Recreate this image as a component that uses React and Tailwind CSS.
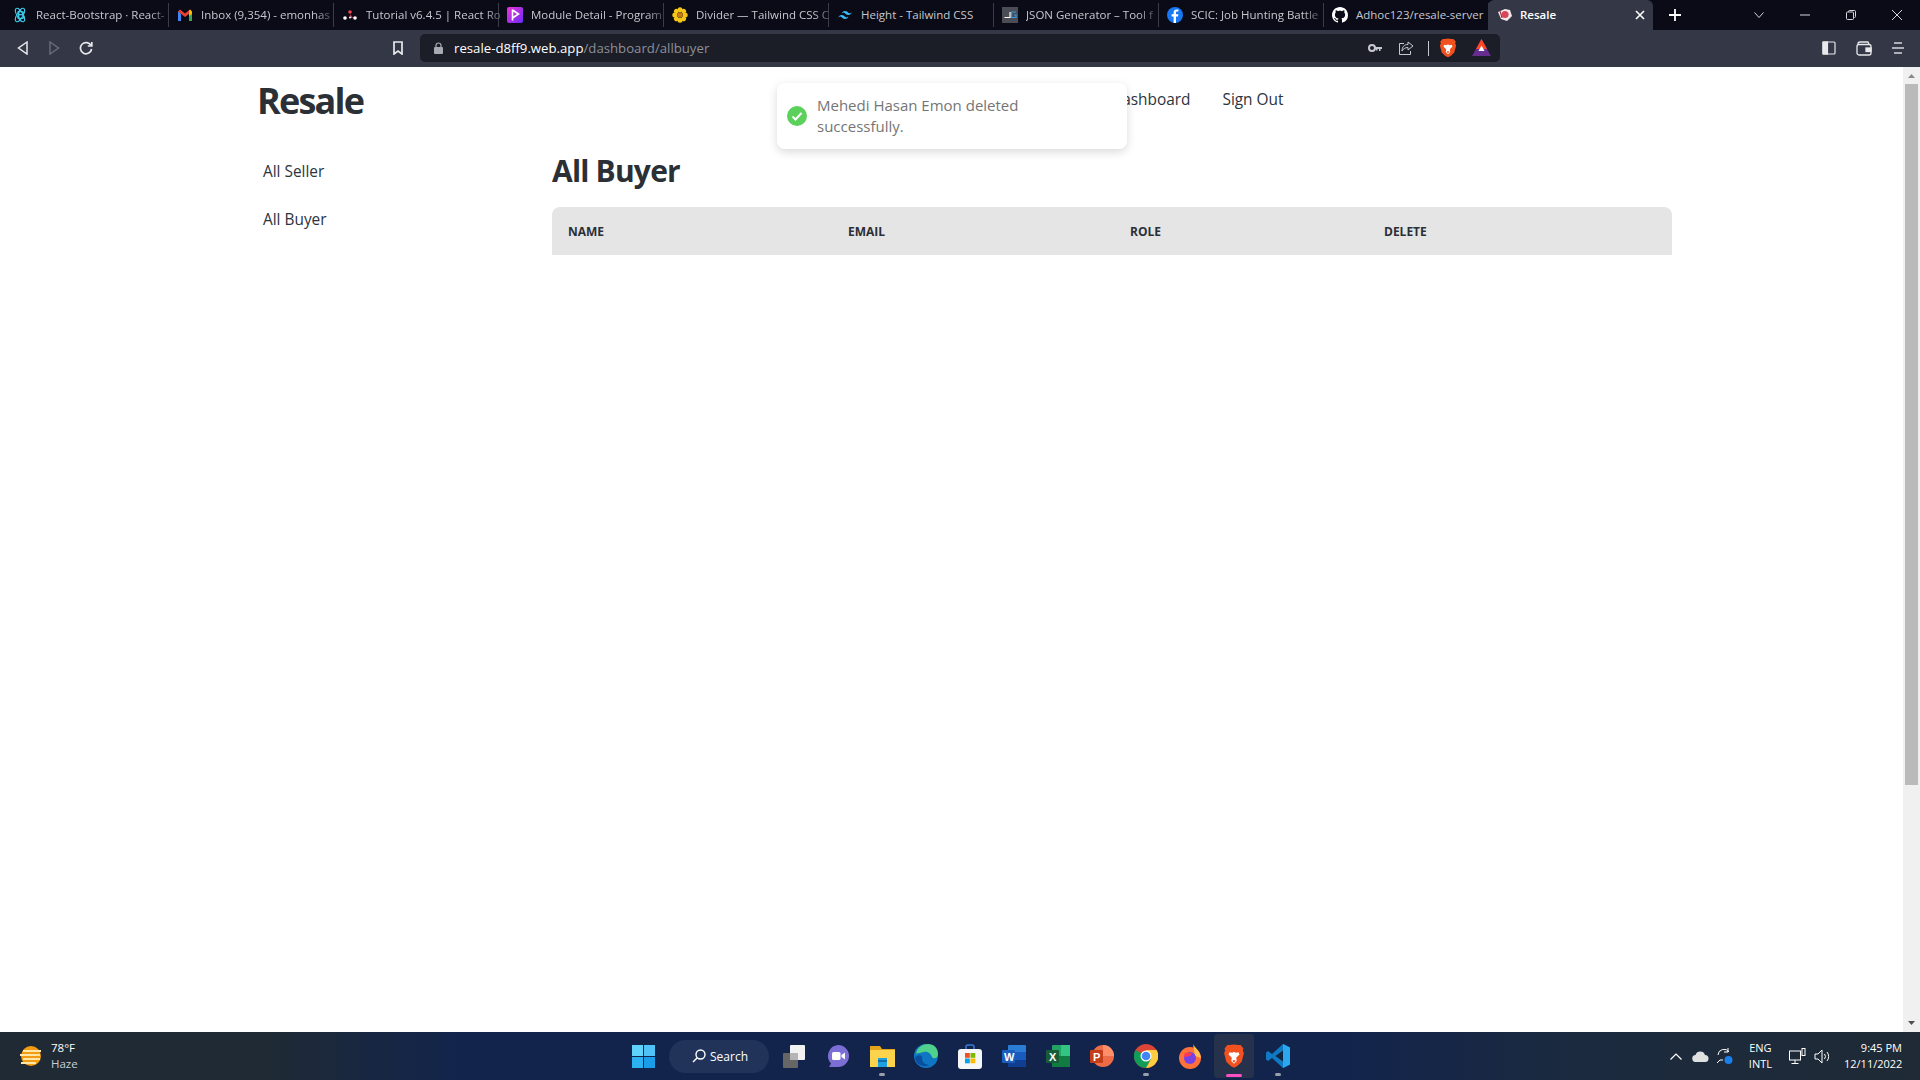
import React from "react";

const Bootstrap = () => (
  <svg width="16" height="16" viewBox="0 0 16 16" fill="none" stroke="#41c7e8" strokeWidth="1">
    <ellipse cx="8" cy="8" rx="7.5" ry="3" transform="rotate(60 8 8)" />
    <ellipse cx="8" cy="8" rx="7.5" ry="3" transform="rotate(-60 8 8)" />
    <text x="5" y="12" fontSize="11" fontWeight="700" fill="#41c7e8" stroke="none" fontFamily="Liberation Sans">B</text>
  </svg>
);
const Gmail = () => (
  <svg width="16" height="16" viewBox="0 0 16 16">
    <path d="M1 4v10h3V7z" fill="#4285f4" />
    <path d="M15 4v10h-3V7z" fill="#34a853" />
    <path d="M1 4.5 3 2.6 8 6.6 13 2.6 15 4.5 8 10z" fill="#ea4335" />
    <path d="M13 2.6 15 4.5V7l-3 2V4z" fill="#fbbc04" />
  </svg>
);
const Router = () => (
  <svg width="16" height="16" viewBox="0 0 16 16">
    <circle cx="8" cy="5" r="1.8" fill="#f44250" />
    <circle cx="3" cy="11" r="1.8" fill="#fff" />
    <circle cx="13" cy="11" r="1.8" fill="#fff" />
    <path d="M8 7l3 4H8.5z" fill="#f44250" />
    <circle cx="8" cy="10.5" r="1" fill="#fff" />
  </svg>
);
const Programming = () => (
  <svg width="16" height="16" viewBox="0 0 16 16">
    <defs>
      <linearGradient id="pg" x1="0" y1="0" x2="1" y2="1">
        <stop offset="0" stopColor="#ec34d6" />
        <stop offset="1" stopColor="#6a2cf5" />
      </linearGradient>
    </defs>
    <rect width="16" height="16" rx="2" fill="url(#pg)" />
    <path d="M5.5 2.5v11M5.5 3l6 4-6 4" fill="none" stroke="#fff" strokeWidth="1.6" />
  </svg>
);
const Flower = () => (
  <svg width="16" height="16" viewBox="0 0 16 16">
    {[0, 45, 90, 135, 180, 225, 270, 315].map((a) => (
      <circle key={a} cx="8" cy="2.8" r="2.5" fill="#f5c518" transform={`rotate(${a} 8 8)`} />
    ))}
    <circle cx="8" cy="8" r="2.8" fill="#c77a18" />
  </svg>
);
const Tailwind = ({ s = 16 }) => (
  <svg width={s} height={s} viewBox="0 0 24 24" fill="#38bdf8">
    <path d="M12 6c-2.7 0-4.3 1.3-5 4 1-1.3 2.2-1.8 3.5-1.5.8.2 1.3.7 1.9 1.3 1 1 2.1 2.2 4.6 2.2 2.7 0 4.3-1.3 5-4-1 1.3-2.2 1.8-3.5 1.5-.8-.2-1.3-.7-1.9-1.3C15.6 7.2 14.5 6 12 6zM7 12c-2.7 0-4.3 1.3-5 4 1-1.3 2.2-1.8 3.5-1.5.8.2 1.3.7 1.9 1.3 1 1 2.1 2.2 4.6 2.2 2.7 0 4.3-1.3 5-4-1 1.3-2.2 1.8-3.5 1.5-.8-.2-1.3-.7-1.9-1.3C10.6 13.2 9.5 12 7 12z" />
  </svg>
);
const JsonGen = () => (
  <svg width="16" height="16" viewBox="0 0 16 16">
    <rect width="16" height="16" fill="#4a4d55" />
    <path d="M8 5v5.500H2.500" fill="none" stroke="#fff" strokeWidth="1.2" />
    <path d="M14 5H9.600v5.500H14V8h-2" fill="none" stroke="#2f9be8" strokeWidth="1.2" />
  </svg>
);
const Facebook = () => (
  <svg width="16" height="16" viewBox="0 0 16 16">
    <circle cx="8" cy="8" r="8" fill="#1877f2" />
    <path d="M9 16V9.6h2l.4-2.4H9V5.8c0-.8.3-1.2 1.2-1.2h1.2V2.6c-.5-.1-1.1-.2-1.7-.2-2 0-3.1 1.2-3.1 3.2v1.6H4.6v2.4h2V16z" fill="#fff" />
  </svg>
);
const Github = () => (
  <svg width="16" height="16" viewBox="0 0 16 16" fill="#fff">
    <path d="M8 0C3.58 0 0 3.58 0 8c0 3.54 2.29 6.53 5.47 7.59.4.07.55-.17.55-.38 0-.19-.01-.82-.01-1.49-2.01.37-2.53-.49-2.69-.94-.09-.23-.48-.94-.82-1.13-.28-.15-.68-.52-.01-.53.63-.01 1.08.58 1.23.82.72 1.21 1.87.87 2.33.66.07-.52.28-.87.51-1.07-1.78-.2-3.64-.89-3.64-3.95 0-.87.31-1.59.82-2.15-.08-.2-.36-1.02.08-2.12 0 0 .67-.21 2.2.82.64-.18 1.32-.27 2-.27s1.36.09 2 .27c1.53-1.04 2.2-.82 2.2-.82.44 1.1.16 1.92.08 2.12.51.56.82 1.27.82 2.15 0 3.07-1.87 3.75-3.65 3.95.29.25.54.73.54 1.48 0 1.07-.01 1.93-.01 2.2 0 .21.15.46.55.38A8.01 8.01 0 0 0 16 8c0-4.42-3.58-8-8-8z" />
  </svg>
);
const ResaleIcon = () => (
  <svg width="16" height="16" viewBox="0 0 16 16">
    <path d="M1 5 8 2l5 1 2 6-5 5-6-2z" fill="#f3e9e9" />
    <circle cx="8" cy="7.5" r="3.6" fill="#d9455a" />
    <path d="M3 4l2 7" stroke="#8c2a3a" strokeWidth="1" />
  </svg>
);
const Brave = ({ s = 18 }) => (
  <svg width={s} height={s * 1.1} viewBox="0 0 20 22">
    <path d="M10 .5 14 1l2 0 2.600 3-.6 2 1 2.200-2 8-4 3.800-3 1.500-3-1.500-4-3.800-2-8L2 6 1.400 4 4 1l2 0z" fill="#f1501f" />
    <path d="M6 7.500l2.500.5L10 7l1.500 1 2.500-.5 1 2-3 3 .5 3L10 18l-2.500-2.500.5-3-3-3z" fill="#fff" />
    <path d="M8.500 15.300 10 14.500l1.500.8L10 17z" fill="#f1501f" />
  </svg>
);
const Bat = () => (
  <svg width="19" height="18" viewBox="0 0 19 18">
    <path d="M9.500 0 19 17H0z" fill="#662d91" />
    <path d="M9.500 0 15 10H4z" fill="#ff4724" />
    <path d="M9.500 6.500 12.500 12h-6z" fill="#fff" />
  </svg>
);

const tabs = [
  [Bootstrap, "React-Bootstrap · React-", true],
  [Gmail, "Inbox (9,354) - emonhas", true],
  [Router, "Tutorial v6.4.5 | React Ro", true],
  [Programming, "Module Detail - Program", true],
  [Flower, "Divider — Tailwind CSS C", true],
  [() => <Tailwind />, "Height - Tailwind CSS", false],
  [JsonGen, "JSON Generator – Tool f", true],
  [Facebook, "SCIC: Job Hunting Battle", true],
  [Github, "Adhoc123/resale-server", false],
];

function Tabs() {
  return (
    <div className="h-[30px] bg-[#0a0b16] flex items-center pl-[4px] text-[11.500px] text-[#c6c8cf] shrink-0">
      {tabs.map(([Icon, title, fade], i) => (
        <div key={i} className="w-[165px] h-[24px] flex items-center gap-[8px] pl-[8px] border-r border-[#3a3c47] shrink-0">
          <span className="shrink-0 flex"><Icon /></span>
          <span className={fade ? "whitespace-nowrap [mask-image:linear-gradient(90deg,#000_88%,rgba(0,0,0,0.35))]" : "whitespace-nowrap"}>{title}</span>
        </div>
      ))}
      <div className="h-[30px] w-[165px] bg-[#343746] rounded-t-[6px] flex items-center pl-[9px] pr-[8px] gap-[7px] text-white font-semibold shrink-0 ml-[-1px]">
        <ResaleIcon />
        <span className="flex-1">Resale</span>
        <svg width="10" height="10" viewBox="0 0 10 10" stroke="#fff" strokeWidth="1.6"><path d="M1 1l8 8M9 1l-8 8" /></svg>
      </div>
      <div className="w-[44px] flex justify-center shrink-0">
        <svg width="12" height="12" viewBox="0 0 12 12" stroke="#fff" strokeWidth="1.8"><path d="M6 0v12M0 6h12" /></svg>
      </div>
      <div className="flex-1" />
      <div className="flex items-center text-[#d5d6dc] shrink-0">
        <div className="w-[46px] flex justify-center">
          <svg width="10" height="6" viewBox="0 0 10 6" fill="none" stroke="currentColor"><path d="M.5.500 5 5.500 9.500.500" /></svg>
        </div>
        <div className="w-[46px] flex justify-center">
          <svg width="10" height="2" viewBox="0 0 10 2" stroke="currentColor"><path d="M0 1h10" /></svg>
        </div>
        <div className="w-[46px] flex justify-center">
          <svg width="10" height="10" viewBox="0 0 10 10" fill="none" stroke="currentColor"><rect x=".5" y="2" width="7" height="7.500" rx="1" /><path d="M2.500 2V1.500a1 1 0 0 1 1-1h5a1 1 0 0 1 1 1v5a1 1 0 0 1-1 1" /></svg>
        </div>
        <div className="w-[46px] flex justify-center">
          <svg width="10" height="10" viewBox="0 0 10 10" fill="none" stroke="currentColor"><path d="M0 0l10 10M10 0L0 10" /></svg>
        </div>
      </div>
    </div>
  );
}

function Toolbar() {
  return (
    <div className="h-[37px] pb-[1px] bg-[#343746] flex items-center shrink-0 text-[#d8d9de]">
      <div className="w-[420px] flex items-center shrink-0">
        <div className="w-[38px] flex justify-center pl-[6px]">
          <svg width="11" height="14" viewBox="0 0 11 14" fill="none" stroke="#e8e9ec" strokeWidth="1.500"><path d="M10 1 1.500 7 10 13z" /></svg>
        </div>
        <div className="w-[32px] flex justify-center">
          <svg width="11" height="14" viewBox="0 0 11 14" fill="none" stroke="#686b78" strokeWidth="1.500"><path d="M1 1l8.500 6L1 13z" /></svg>
        </div>
        <div className="w-[32px] flex justify-center">
          <svg width="14" height="14" viewBox="0 0 14 14" fill="none" stroke="#e8e9ec" strokeWidth="1.700"><path d="M12 4.500A5.600 5.600 0 1 0 12.600 8" /><path d="M12.800 1v4h-4" fill="none" /></svg>
        </div>
        <div className="ml-[286px] w-[20px] flex justify-center">
          <svg width="10" height="14" viewBox="0 0 10 14" fill="none" stroke="#e8e9ec" strokeWidth="1.700"><path d="M1 1h8v12L5 10l-4 3z" /></svg>
        </div>
      </div>
      <div className="w-[1080px] h-[28px] bg-[#1b1d27] rounded-[5px] flex items-center pl-[14px] pr-[9px] shrink-0">
        <svg width="9" height="12" viewBox="0 0 9 12" className="mr-[11px]"><path d="M2 5V3.500a2.500 2.500 0 0 1 5 0V5" fill="none" stroke="#a8aab3" strokeWidth="1.200" /><rect y="5" width="9" height="7" rx="1" fill="#a8aab3" /></svg>
        <span className="text-[13.200px] text-white pt-[1px]">resale-d8ff9.web.app<span className="text-[#8d8f99]">/dashboard/allbuyer</span></span>
        <div className="flex-1" />
        <svg width="14" height="8" viewBox="0 0 14 8" className="mr-[17px]"><circle cx="4" cy="4" r="3" fill="none" stroke="#c8c9d0" strokeWidth="2" /><path d="M7 3h7v2h-1.500v2H11V5H9.500v1.500H8V5H7z" fill="#c8c9d0" /></svg>
        <svg width="15" height="14" viewBox="0 0 15 14" fill="none" stroke="#c8c9d0" className="mr-[14px]"><path d="M9 1l5 4-5 4V6.500C6 6.500 4 8 3 10c0-4 2-6.500 6-6.500z" /><path d="M5 2.500H.5v11h11V10" /></svg>
        <div className="w-px h-[15px] bg-[#c8c9d0] mr-[10px]" />
        <span className="mr-[15px] flex"><Brave s={18} /></span>
        <Bat />
      </div>
      <div className="flex-1" />
      <div className="flex items-center gap-[20px] pr-[16px]">
        <svg width="14" height="14" viewBox="0 0 14 14" fill="none" stroke="#e8e9ec" strokeWidth="1.200"><rect x="1" y="1" width="12" height="12" rx="1" /><rect x="1" y="1" width="4.500" height="12" fill="#e8e9ec" /></svg>
        <svg width="16" height="15" viewBox="0 0 16 15" fill="none" stroke="#e8e9ec" strokeWidth="1.300"><path d="M2 3.500V3a2 2 0 0 1 2-2h8l1 2.500" /><rect x="1" y="3.500" width="14" height="10.500" rx="2" /><rect x="10" y="7" width="5" height="3.500" fill="#e8e9ec" /></svg>
        <svg width="12" height="12" viewBox="0 0 12 12" stroke="#d5d6dc" strokeWidth="1.500"><path d="M2 1h8M0 6h12M2 11h8" /></svg>
      </div>
    </div>
  );
}

function Toast() {
  return (
    <div className="absolute left-[777px] top-[16px] w-[350px] h-[66px] bg-white rounded-[8px] shadow-[0_3px_10px_rgba(0,0,0,0.15)] flex items-center px-[10px] text-[#757575] text-[15px] leading-[21px]">
      <svg width="20" height="20" viewBox="0 0 20 20" className="shrink-0 mr-[10px]">
        <circle cx="10" cy="10" r="10" fill="#5bd05b" />
        <path d="M5.500 10.500l3 3 6-6.500" fill="none" stroke="#fff" strokeWidth="2" />
      </svg>
      <div className="w-[220px]">Mehedi Hasan Emon deleted successfully.</div>
    </div>
  );
}

function Page() {
  return (
    <div className="relative flex-1 bg-white flex min-h-0 text-[#2b3440]">
      <div className="flex-1 min-w-0 flex flex-col">
        <header className="h-[69px] flex items-center pl-[257px] shrink-0">
          <div className="w-[854px] shrink-0 text-[36px] font-bold leading-none tracking-[-1.800px] text-[#2b2f36] mt-[-2px]">Resale</div>
          <nav className="flex items-center gap-[32px] text-[15.400px] mt-[-3px]">
            <span>Dashboard</span>
            <span>Sign Out</span>
          </nav>
        </header>
        <div className="flex pl-[263px]">
          <aside className="w-[289px] shrink-0 text-[15.400px] flex flex-col gap-[24px] pt-[24px]">
            <div className="leading-[24px]">All Seller</div>
            <div className="leading-[24px]">All Buyer</div>
          </aside>
          <main className="w-[1120px] shrink-0">
            <h1 className="text-[30px] font-bold leading-[36px] tracking-[-0.800px] mt-[17px] mb-[18px] text-[#2b2f36]">All Buyer</h1>
            <table className="w-full table-fixed text-[12px] font-bold uppercase text-[#2b2f36]">
              <thead>
                <tr className="h-[48px] bg-[#e5e5e5] text-left">
                  <th className="w-[280px] pl-[16px] pt-[1px] rounded-tl-[8px] font-bold">Name</th>
                  <th className="w-[282px] pl-[16px] pt-[1px] font-bold">Email</th>
                  <th className="w-[254px] pl-[16px] pt-[1px] font-bold">Role</th>
                  <th className="pl-[16px] pt-[1px] rounded-tr-[8px] font-bold">Delete</th>
                </tr>
              </thead>
            </table>
          </main>
        </div>
      </div>
      <div className="w-[17px] shrink-0 bg-[#f0f0f0] flex flex-col items-center">
        <svg width="7" height="4" viewBox="0 0 7 4" className="mt-[7px] shrink-0"><path d="M3.500 0 7 4H0z" fill="#8a8a8a" /></svg>
        <div className="w-[13px] h-[701px] bg-[#bababa] mt-[6px] shrink-0" />
        <div className="flex-1" />
        <svg width="7" height="4" viewBox="0 0 7 4" className="mb-[7px] shrink-0"><path d="M3.500 4 7 0H0z" fill="#505050" /></svg>
      </div>
      <Toast />
    </div>
  );
}

const Win = () => (
  <div className="grid grid-cols-2 gap-[1px] w-[23px] h-[23px]">
    <div className="bg-[#5fd3fb]" /><div className="bg-[#4fc3f7]" />
    <div className="bg-[#2bb0f0]" /><div className="bg-[#1a9ce8]" />
  </div>
);
const Task = ({ children, dot, active }) => (
  <div className={`relative w-[40px] h-[44px] mx-[2px] flex items-center justify-center rounded-[4px] ${active ? "bg-[#26324c]" : ""}`}>
    {children}
    {dot && <div className="absolute bottom-[2px] left-1/2 -translate-x-1/2 w-[6px] h-[3px] rounded-full bg-[#9aa0ab]" />}
    {active && <div className="absolute bottom-[1px] left-1/2 -translate-x-1/2 w-[16px] h-[3px] rounded-full bg-[#ff4fc3]" />}
  </div>
);

function Taskbar() {
  return (
    <div className="h-[48px] shrink-0 bg-[linear-gradient(90deg,#1f2a35_0%,#1f2a35_14%,#12244c_24%,#12244c_70%,#1b2a3f_82%,#1f2a35_100%)] flex items-center relative text-white">
      <div className="flex items-center pl-[18px] w-[620px] shrink-0">
        <svg width="26" height="26" viewBox="0 0 26 26">
          <circle cx="13" cy="13" r="10" fill="#f39c12" />
          <path d="M5 8h18M2 12h20M5 16h17M3 20h15" stroke="#ffe7a8" strokeWidth="2" />
        </svg>
        <div className="ml-[7px] text-[11.500px] leading-[16px]">
          <div>78°F</div>
          <div className="text-[#c9ced4]">Haze</div>
        </div>
      </div>
      <div className="w-[23px] flex justify-center shrink-0 ml-[12px]"><Win /></div>
      <div className="ml-[14px] w-[100px] h-[33px] rounded-full bg-[#22335a] flex items-center pl-[23px] gap-[4px] text-[12px] shrink-0">
        <svg width="14" height="14" viewBox="0 0 14 14" fill="none" stroke="#fff" strokeWidth="1.400"><circle cx="8.500" cy="5.500" r="4.500" /><path d="M5 9l-4 4" /></svg>
        <span className="pt-[2px]">Search</span>
      </div>
      <div className="flex items-center ml-[3px] shrink-0">
        <Task>
          <svg width="24" height="24" viewBox="0 0 24 24"><rect x="8" y="1" width="15" height="15" rx="1" fill="#f2f2f2" /><rect x="1" y="9" width="15" height="15" rx="1" fill="#666" /><rect x="8" y="9" width="8" height="7" fill="#b5b5b5" /></svg>
        </Task>
        <Task>
          <svg width="24" height="24" viewBox="0 0 24 24"><path d="M12 1a11 11 0 0 1 0 22H3l2-3.500A11 11 0 0 1 12 1z" fill="#7b6fd6" /><rect x="6" y="8" width="8.500" height="8" rx="1.500" fill="#fff" /><path d="M15.500 11l3.500-2.500v7L15.500 13z" fill="#fff" /></svg>
        </Task>
        <Task dot>
          <svg width="25" height="24" viewBox="0 0 25 24"><path d="M0 2h10l2 3h13v17H0z" fill="#e3a41c" /><rect y="6" width="25" height="17" fill="#fbd34d" /><rect x="8" y="14" width="9" height="9" fill="#1d9fe0" /><rect x="8" y="16" width="9" height="2" fill="#0f6ca8" /></svg>
        </Task>
        <Task>
          <svg width="24" height="24" viewBox="0 0 24 24"><circle cx="12" cy="12" r="12" fill="#0f76c4" /><path d="M2 10C3 3 9 0 14 0c6 0 10 4 10 10 0 5-5 5-6 3-1-3-4-6-8-5-3 .7-6 1-8 2z" fill="#4fd08c" /><path d="M8 14c0 5 4 7 8 7-6 3-14 0-15-7 2-3 7-4 7 0z" fill="#0a4f9e" /></svg>
        </Task>
        <Task>
          <svg width="24" height="25" viewBox="0 0 24 25"><path d="M8 5V3a2 2 0 0 1 2-2h4a2 2 0 0 1 2 2v2" fill="none" stroke="#3a7bd5" strokeWidth="1.500" /><rect y="5" width="24" height="20" rx="3" fill="#f5f6f7" /><rect x="7" y="9" width="4.800" height="4.800" fill="#f25022" /><rect x="12.500" y="9" width="4.800" height="4.800" fill="#7fba00" /><rect x="7" y="14.500" width="4.800" height="4.800" fill="#00a4ef" /><rect x="12.500" y="14.500" width="4.800" height="4.800" fill="#ffb900" /></svg>
        </Task>
        <Task>
          <svg width="24" height="24" viewBox="0 0 24 24"><rect x="6" y="1" width="18" height="22" rx="1" fill="#2b7cd3" /><rect x="6" y="8" width="18" height="8" fill="#185abd" /><rect x="6" y="16" width="18" height="7" fill="#103f91" /><rect y="6" width="13" height="13" rx="1" fill="#1a5fc0" /><text x="2" y="16.500" fontSize="11" fontWeight="700" fill="#fff" fontFamily="Liberation Sans">W</text></svg>
        </Task>
        <Task>
          <svg width="24" height="24" viewBox="0 0 24 24"><rect x="6" y="1" width="18" height="22" rx="1" fill="#21a366" /><rect x="15" y="1" width="9" height="11" fill="#33c481" /><rect x="6" y="12" width="18" height="11" fill="#107c41" /><rect y="6" width="13" height="13" rx="1" fill="#185c37" /><text x="3" y="16.500" fontSize="11" fontWeight="700" fill="#fff" fontFamily="Liberation Sans">X</text></svg>
        </Task>
        <Task>
          <svg width="24" height="24" viewBox="0 0 24 24"><circle cx="13" cy="12" r="11" fill="#ed6c47" /><path d="M13 1a11 11 0 0 1 11 11H13z" fill="#ff8f6b" /><rect y="6" width="13" height="13" rx="1" fill="#c43e1c" /><text x="3" y="16.500" fontSize="11" fontWeight="700" fill="#fff" fontFamily="Liberation Sans">P</text></svg>
        </Task>
        <Task dot>
          <svg width="24" height="24" viewBox="0 0 24 24"><circle cx="12" cy="12" r="12" fill="#db4437" /><path d="M12 12 1.600 6A12 12 0 0 0 12 24l5-9z" fill="#0f9d58" /><path d="M12 6h10.600A12 12 0 0 1 12 24l5-9z" fill="#ffcd40" /><circle cx="12" cy="12" r="5.500" fill="#fff" /><circle cx="12" cy="12" r="4.300" fill="#4285f4" /></svg>
        </Task>
        <Task>
          <svg width="24" height="25" viewBox="0 0 24 25"><circle cx="12" cy="14" r="11" fill="#ff7139" /><path d="M15 0c1 3 7 6 8 14l-6-2z" fill="#ffbd4f" /><circle cx="12" cy="14" r="6" fill="#7542e5" /><path d="M6 11c2-3 6-3 8-1l-2 2-6 1z" fill="#ff3750" /></svg>
        </Task>
        <Task active>
          <Brave s={22} />
        </Task>
        <Task dot>
          <svg width="24" height="24" viewBox="0 0 24 24"><path d="M17 0l7 3.500v17L17 24 6 14l-4 3-2-1.500v-7L2 7l4 3z" fill="#0f79c4" /><path d="M17 0l7 3.500v17L17 24z" fill="#2aa7ef" /><path d="M17 6.500v11L9.500 12z" fill="#12233f" /></svg>
        </Task>
      </div>
      <div className="flex-1" />
      <div className="flex items-center shrink-0 text-[11px] text-white pr-[18px]">
        <svg width="12" height="7" viewBox="0 0 12 7" fill="none" stroke="#fff" strokeWidth="1.200" className="mr-[10px]"><path d="M.5 6.500 6 1l5.500 5.500" /></svg>
        <svg width="17" height="11" viewBox="0 0 17 11" className="mr-[7px]"><path d="M4 11a3.500 3.500 0 0 1-.5-7A5 5 0 0 1 13 4a3.500 3.500 0 0 1 0 7z" fill="#e0e0e0" /></svg>
        <svg width="18" height="18" viewBox="0 0 18 18" fill="none" className="mr-[15px]"><path d="M2 8a6 6 0 0 1 11-3M12 1v4H8M1 16l3-3h3" stroke="#fff" strokeWidth="1" /><circle cx="12.500" cy="13" r="4" fill="#1a7fe8" /></svg>
        <div className="text-center leading-[16px] mr-[17px]">
          <div>ENG</div>
          <div>INTL</div>
        </div>
        <svg width="17" height="17" viewBox="0 0 17 17" fill="none" stroke="#fff" className="mr-[8px]"><rect x=".5" y="3" width="11" height="9" /><path d="M6 12v3M2.500 15.500h7" /><rect x="13" y=".5" width="3" height="7" /></svg>
        <svg width="17" height="15" viewBox="0 0 17 15" fill="none" stroke="#fff" className="mr-[13px]"><path d="M1 5h3l4-4v13l-4-4H1z" /><path d="M10.500 5a4 4 0 0 1 0 5M13 3a7 7 0 0 1 0 9" /></svg>
        <div className="text-right leading-[16px] w-[58px]">
          <div>9:45 PM</div>
          <div>12/11/2022</div>
        </div>
      </div>
    </div>
  );
}

export default function App() {
  return (
    <div className="w-[1920px] h-[1080px] flex flex-col overflow-hidden font-['Open_Sans','Noto_Sans',sans-serif]">
      <Tabs />
      <Toolbar />
      <Page />
      <Taskbar />
    </div>
  );
}
